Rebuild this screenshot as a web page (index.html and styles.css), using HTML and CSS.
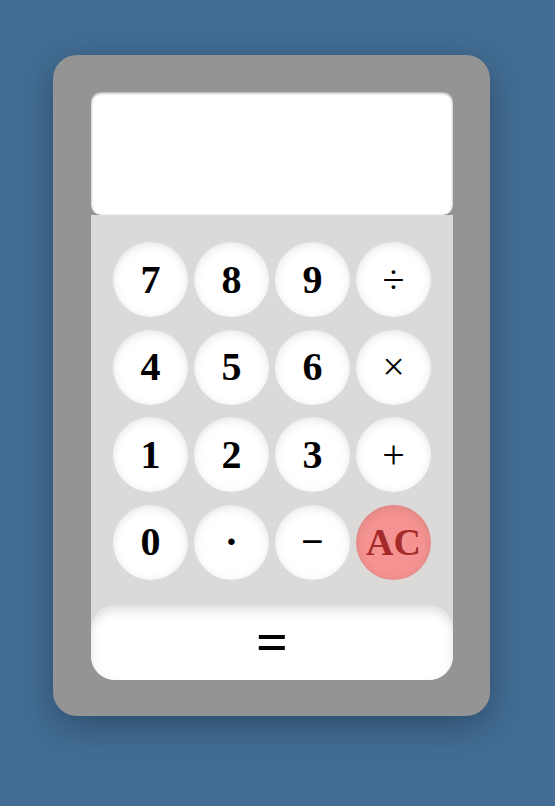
FILE: index.html
```html
<!DOCTYPE html>
<html lang="en">
<head>
<meta charset="utf-8">
<title>Calculator</title>
<link rel="stylesheet" href="styles.css">
</head>
<body>
  <div class="calc">
    <div class="display"></div>
    <div class="pad">
      <div class="keys">
        <button class="key num">7</button>
        <button class="key num">8</button>
        <button class="key num">9</button>
        <button class="key op">÷</button>
        <button class="key num">4</button>
        <button class="key num">5</button>
        <button class="key num">6</button>
        <button class="key op">×</button>
        <button class="key num">1</button>
        <button class="key num">2</button>
        <button class="key num">3</button>
        <button class="key op">+</button>
        <button class="key num">0</button>
        <button class="key num">·</button>
        <button class="key num">−</button>
        <button class="key clear">AC</button>
      </div>
      <button class="equals">=</button>
    </div>
  </div>
</body>
</html>
```
FILE: styles.css
```css
html, body {
  margin: 0;
  padding: 0;
}
body {
  background: #436d94;
  height: 806px;
  font-family: "Liberation Serif", "Times New Roman", serif;
  overflow: hidden;
}
.calc {
  box-sizing: border-box;
  margin: 55px 0 0 53px;
  width: 437px;
  height: 661px;
  padding: 37px 37px 36px 38px;
  background: #949494;
  border-radius: 24px;
  box-shadow: 0 10px 34px rgba(20, 40, 60, 0.45);
  display: flex;
  flex-direction: column;
}
.display {
  height: 123px;
  background: #fff;
  border-radius: 10px;
  box-shadow: inset 0 1px 3px rgba(0, 0, 0, 0.4);
}
.pad {
  background: #dbdad9;
  border-radius: 0 0 24px 24px;
  display: flex;
  flex-direction: column;
}
.keys {
  display: grid;
  grid-template-columns: repeat(4, 75px);
  grid-auto-rows: 75px;
  column-gap: 6px;
  row-gap: 12.67px;
  padding: 27px 22px 25px 22px;
}
.key {
  width: 75px;
  height: 75px;
  border: none;
  border-radius: 50%;
  background: #fff;
  box-shadow: inset 0 2px 10px rgba(0, 0, 0, 0.11);
  font-family: "Liberation Serif", "Times New Roman", serif;
  font-size: 40px;
  font-weight: bold;
  color: #000;
  padding: 0;
  display: flex;
  align-items: center;
  justify-content: center;
  line-height: 1;
}
.key.op {
  font-weight: normal;
}
.key.clear {
  background: #f49391;
  color: #a52a2a;
  font-size: 38px;
}
.equals {
  height: 75px;
  border: none;
  border-radius: 24px;
  background: #fff;
  box-shadow: inset 0 6px 10px rgba(0, 0, 0, 0.12);
  font-family: "Liberation Serif", "Times New Roman", serif;
  font-size: 56px;
  font-weight: bold;
  color: #000;
  padding: 0;
  display: flex;
  align-items: center;
  justify-content: center;
  line-height: 1;
}
```
